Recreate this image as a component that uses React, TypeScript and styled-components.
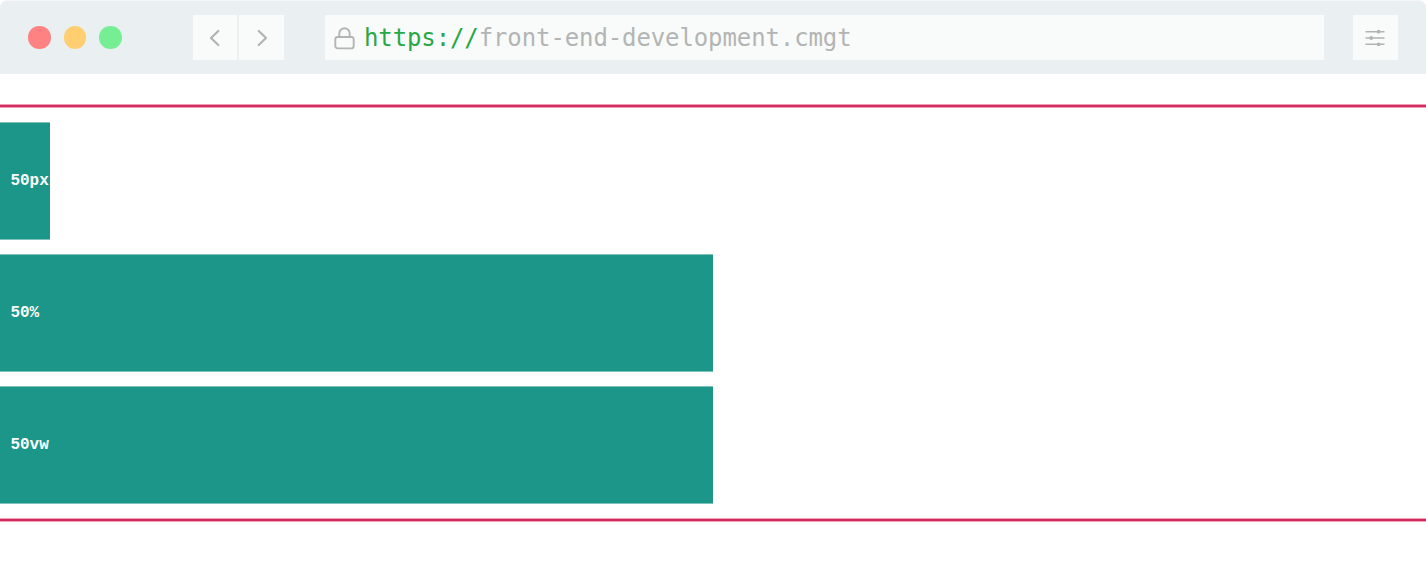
import React from "react";
import styled, { createGlobalStyle } from "styled-components";

const GlobalStyle = createGlobalStyle`
  *, *::before, *::after { box-sizing: border-box; }
  body { margin: 0; background: #fff; overflow: hidden; }
`;

const Browser = styled.div`
  width: 100%;
  height: 565px;
`;

const Toolbar = styled.header`
  display: flex;
  align-items: center;
  height: 74px;
  padding: 0 28.5px 0 28px;
  background: #eaeff2;
  border-top: 1px solid #f5f7f9;
  border-radius: 7px 7px 0 0;
`;

const Lights = styled.div`
  display: flex;
  gap: 13px;
  width: 164.6px;
`;

const Light = styled.span<{ $color: string }>`
  width: 22.7px;
  height: 22.7px;
  border-radius: 50%;
  background: ${(p) => p.$color};
`;

const Nav = styled.nav`
  display: flex;
  gap: 2px;
  margin-right: 41px;
`;

const ToolButton = styled.button`
  display: flex;
  align-items: center;
  justify-content: center;
  width: 44.7px;
  height: 45px;
  padding: 0;
  border: 0;
  background: #f9fbfa;
  color: #b3b3b3;
`;

const AddressBar = styled.div`
  display: flex;
  align-items: center;
  flex: 1;
  height: 45px;
  margin-right: 29px;
  padding-left: 9px;
  background: #f9fbfa;
  color: #b3b5b4;
`;

const Url = styled.span`
  margin-left: 8px;
  padding-top: 2px;
  font: 24px/43px "DejaVu Sans Mono", monospace;
  letter-spacing: -0.11px;
  white-space: pre;
`;

const Scheme = styled.span`
  color: #28a745;
`;

const Page = styled.main`
  display: flex;
  flex-direction: column;
  gap: 14px;
  padding-top: 30px;
`;

const Rule = styled.div`
  height: 4px;
  background: #d32c60;
  border: solid #ee9db6;
  border-width: 1px 0;
`;

const Block = styled.div<{ $width: string }>`
  display: flex;
  align-items: center;
  width: ${(p) => p.$width};
  height: 118px;
  padding-left: 10.5px;
  background: #1b9688;
  border: solid #80c3bb;
  border-width: 1px 0;
  color: #fff;
  font: bold 16px/20px "Liberation Mono", monospace;
  letter-spacing: -0.05px;
  white-space: nowrap;
`;

const Chevron = ({ d }: { d: string }) => (
  <svg width="20" height="20" viewBox="0 0 20 20" fill="none" stroke="currentColor" strokeWidth="2.2" strokeLinecap="round" strokeLinejoin="round">
    <path d={d} />
  </svg>
);

const Lock = () => (
  <svg width="22" height="24" viewBox="0 0 22 24" fill="none" stroke="currentColor" strokeWidth="1.9">
    <rect x="1.3" y="11" width="18.4" height="11.4" rx="2.4" />
    <path d="M5.3 11V7.4a5.2 5.2 0 0 1 10.4 0V11" />
  </svg>
);

const Sliders = () => (
  <svg width="20" height="18" viewBox="0 0 20 18" fill="currentColor" stroke="currentColor">
    <path d="M.5 2.7h19M.5 9h19M.5 15.3h19" strokeWidth="1.5" />
    <g stroke="none">
      <circle cx="13.6" cy="2.7" r="1.9" />
      <circle cx="6.2" cy="9" r="1.9" />
      <circle cx="13.6" cy="15.3" r="1.9" />
    </g>
  </svg>
);

export default function App() {
  return (
    <Browser>
      <GlobalStyle />
      <Toolbar>
        <Lights>
          <Light $color="#ff8282" />
          <Light $color="#ffce70" />
          <Light $color="#76ef94" />
        </Lights>
        <Nav>
          <ToolButton aria-label="Back">
            <Chevron d="M13.3 3L6 10l7.3 7" />
          </ToolButton>
          <ToolButton aria-label="Forward">
            <Chevron d="M6.7 3L14 10l-7.3 7" />
          </ToolButton>
        </Nav>
        <AddressBar>
          <Lock />
          <Url>
            <Scheme>https://</Scheme>front-end-development.cmgt
          </Url>
        </AddressBar>
        <ToolButton aria-label="Settings">
          <Sliders />
        </ToolButton>
      </Toolbar>
      <Page>
        <Rule />
        <Block $width="50px">50px</Block>
        <Block $width="50%">50%</Block>
        <Block $width="50vw">50vw</Block>
        <Rule />
      </Page>
    </Browser>
  );
}
